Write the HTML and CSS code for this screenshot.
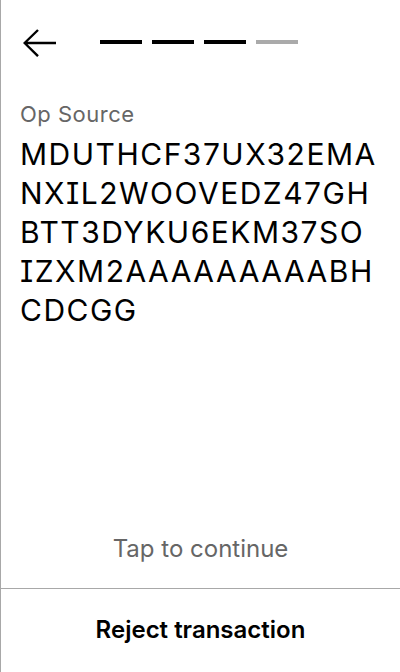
FILE: index.html
```html
<!DOCTYPE html>
<html lang="en">
<head>
<meta charset="utf-8">
<link rel="stylesheet" href="styles.css">
</head>
<body>
<div class="screen">
  <header class="topbar">
    <svg class="back" width="34" height="28" viewBox="0 0 34 28" aria-label="Back">
      <path d="M15 1 L1.6 14 L15 27.2 M1.6 14 H33" fill="none" stroke="#000" stroke-width="2.4" stroke-linejoin="miter"/>
    </svg>
    <div class="steps">
      <span class="step done"></span>
      <span class="step done"></span>
      <span class="step done"></span>
      <span class="step"></span>
    </div>
  </header>
  <main class="content">
    <div class="label">Op Source</div>
    <div class="value">
      <span class="chunk">MDUTHCF37UX32EMA</span>
      <span class="chunk">NXIL2WOOVEDZ47GH</span>
      <span class="chunk">BTT3DYKU6EKM37SO</span>
      <span class="chunk">IZXM2AAAAAAAAABH</span>
      <span class="chunk">CDCGG</span>
    </div>
  </main>
  <div class="tap">Tap to continue</div>
  <button class="reject">Reject transaction</button>
</div>
</body>
</html>
```
FILE: styles.css
```css
* { box-sizing: border-box; }
html, body { margin: 0; padding: 0; background: #fff; }
body { font-family: Inter, "Noto Sans", sans-serif; color: #000; }
.screen {
  width: 400px;
  height: 672px;
  border-left: 1px solid #a8a8a8;
  display: flex;
  flex-direction: column;
}
.topbar {
  display: flex;
  align-items: center;
  padding: 29px 0 0 22px;
}
.back { display: block; }
.steps {
  display: flex;
  gap: 10px;
  margin-left: 43px;
  margin-bottom: 2px;
}
.step {
  width: 42px;
  height: 4px;
  background: #aaaaaa;
}
.step.done { background: #000; }
.content {
  flex: 1;
  padding: 0 19px;
  margin-top: 44px;
}
.label {
  font-size: 22px;
  line-height: 26px;
  letter-spacing: 0.5px;
  color: #666;
}
.value {
  margin-top: 8px;
  font-size: 30px;
  line-height: 39px;
  letter-spacing: 1.5px;
  font-feature-settings: "cv08" 1;
  color: #000;
}
.chunk {
  display: block;
  white-space: nowrap;
}
.tap {
  text-align: center;
  font-size: 24px;
  line-height: 28px;
  color: #666;
  padding-bottom: 25px;
}
.reject {
  display: block;
  width: 100%;
  border: 0;
  border-top: 1px solid #a8a8a8;
  background: #fff;
  font-family: inherit;
  font-size: 24px;
  font-weight: 600;
  line-height: 28px;
  color: #000;
  padding: 27px 0 28px;
  margin: 0;
}
```
